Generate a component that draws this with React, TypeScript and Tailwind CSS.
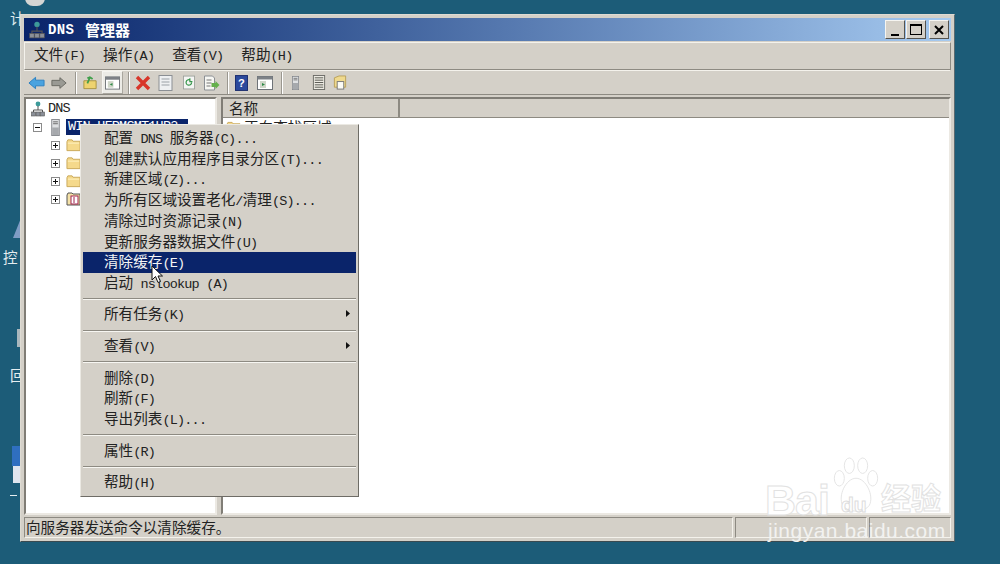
const FONT = "font-['Noto_Sans_CJK_SC','Liberation_Mono',monospace]";
const LATIN = "font-['Liberation_Mono',monospace] whitespace-pre text-[13.5px] tracking-[-0.8px]";

// latin runs are narrower than the CJK ones, the screenshot uses half-width glyphs
function Txt({ text }: { text: string }) {
  const parts = text.split(/([\x20-\x7e]+)/).filter(Boolean);
  return (
    <span>
      {parts.map((p, i) =>
        /^[\x20-\x7e]+$/.test(p) ? (
          <span key={i} className={LATIN}>
            {p}
          </span>
        ) : (
          <span key={i}>{p}</span>
        )
      )}
    </span>
  );
}

function Sep({ className = "" }: { className?: string }) {
  return <div className={`h-[22px] w-[2px] shrink-0 border-l border-r border-l-[#9a978f] border-r-white ${className}`} />;
}

function FolderIcon({ className = "" }: { className?: string }) {
  return (
    <svg viewBox="0 0 16 14" className={className}>
      <path d="M1 3.5 L2 1.5 H6.5 L7.5 3 H15 V13 H1 Z" fill="#f5d98b" stroke="#c9a85a" strokeWidth="1" />
      <path d="M2 5 H14" stroke="#fff3c4" strokeWidth="1" />
    </svg>
  );
}

function DnsIcon({ className = "" }: { className?: string }) {
  return (
    <svg viewBox="0 0 14 16" className={className}>
      <circle cx="7" cy="3" r="2.4" fill="#3d9a9a" />
      <path d="M7 5 V9 M2.5 12 V9 H11.5 V12" fill="none" stroke="#555" />
      <rect x="0.5" y="11" width="4" height="4" fill="#8a8f98" stroke="#555" strokeWidth="0.6" />
      <rect x="5" y="11" width="4" height="4" fill="#8a8f98" stroke="#555" strokeWidth="0.6" />
      <rect x="9.5" y="11" width="4" height="4" fill="#8a8f98" stroke="#555" strokeWidth="0.6" />
    </svg>
  );
}

function ServerIcon({ className = "" }: { className?: string }) {
  return (
    <svg viewBox="0 0 9 18" className={className}>
      <rect x="0.5" y="0.5" width="8" height="17" fill="#dfe1e3" stroke="#85888d" />
      <path d="M2 3 H7 M2 5 H7" stroke="#666" />
      <rect x="1" y="9" width="7" height="8" fill="#a6a9ad" />
    </svg>
  );
}

function PlusBox({ open = false }: { open?: boolean }) {
  return (
    <svg viewBox="0 0 9 9" className="h-[9px] w-[9px] shrink-0">
      <rect x="0.5" y="0.5" width="8" height="8" fill="#fff" stroke="#8b8b8b" />
      <path d={open ? "M2 4.5 H7" : "M2 4.5 H7 M4.5 2 V7"} stroke="#111" />
    </svg>
  );
}

function Toolbar() {
  return (
    <div className="mr-[1px] flex h-[25px] shrink-0 items-center border-y border-y-[#f4f2ec] border-b-[#8d8a82] bg-[#d4d0c8]">
      <svg viewBox="0 0 18 14" className="ml-[4px] h-[14px] w-[17px]">
        <path d="M1 7 L8 1 V4 H17 V10 H8 V13 Z" fill="#4aa3e0" stroke="#2a7fc0" />
      </svg>
      <svg viewBox="0 0 18 14" className="ml-[6px] h-[14px] w-[16px]">
        <path d="M17 7 L10 1 V4 H1 V10 H10 V13 Z" fill="#9a9a94" stroke="#66665f" />
      </svg>
      <Sep className="ml-[8px]" />
      <svg viewBox="0 0 16 16" className="ml-[6px] h-[15px] w-[14px]">
        <path d="M1 6 H15 V15 H1 Z" fill="#eed36f" stroke="#a58f3c" />
        <path d="M5 9 L8 2 L11 4 M8 2 L5 3" fill="none" stroke="#3f9f4a" strokeWidth="2" />
      </svg>
      <div className="ml-[5px] flex h-[23px] w-[21px] items-center justify-center border border-[#f5f4f0] border-b-[#a9a69e] border-r-[#a9a69e] bg-[#ecebe6]">
        <svg viewBox="0 0 16 14" className="h-[14px] w-[15px]">
          <rect x="0.5" y="0.5" width="15" height="13" fill="#fff" stroke="#6f7378" />
          <rect x="0.5" y="0.5" width="15" height="3" fill="#7d8186" />
          <rect x="3" y="5" width="6" height="7" fill="#cfd6c8" />
          <path d="M8 7 L5 8.5 L8 10 Z" fill="#2d8a46" />
        </svg>
      </div>
      <Sep className="ml-[5px]" />
      <svg viewBox="0 0 16 16" className="ml-[5px] h-[16px] w-[16px]">
        <path d="M2 2 L14 14 M14 2 L2 14" stroke="#d8362a" strokeWidth="3.4" />
      </svg>
      <svg viewBox="0 0 14 16" className="ml-[7px] h-[16px] w-[15px]">
        <rect x="0.5" y="0.5" width="13" height="15" fill="#eef0f2" stroke="#8b8f94" />
        <path d="M3 4 H11 M3 7 H11 M3 10 H11" stroke="#9aa0a6" />
      </svg>
      <svg viewBox="0 0 14 16" className="ml-[10px] h-[15px] w-[12px]">
        <rect x="0.5" y="0.5" width="13" height="15" fill="#f4f5f3" stroke="#9ba09a" />
        <path d="M10 8 A3.2 3.2 0 1 1 8 5 M8 3 V7 H11" fill="none" stroke="#35954a" strokeWidth="1.4" />
      </svg>
      <svg viewBox="0 0 16 16" className="ml-[8px] h-[16px] w-[17px]">
        <path d="M1 1 H9 L11 3 V15 H1 Z" fill="#f6f6f2" stroke="#8b8f94" />
        <path d="M3 5 H8 M3 8 H8 M3 11 H7" stroke="#777" />
        <path d="M8 8 H12 V6 L16 10 L12 14 V12 H8 Z" fill="#64b04c" />
      </svg>
      <Sep className="ml-[7px]" />
      <svg viewBox="0 0 14 17" className="ml-[6px] h-[16px] w-[13px]">
        <rect x="0.5" y="0.5" width="13" height="16" fill="#2c4a9c" stroke="#17296b" />
        <text x="7" y="13" textAnchor="middle" fontSize="12" fontWeight="700" fill="#fff" fontFamily="Liberation Sans">?</text>
      </svg>
      <svg viewBox="0 0 16 14" className="ml-[9px] h-[14px] w-[16px]">
        <rect x="0.5" y="0.5" width="15" height="13" fill="#fff" stroke="#6f7378" />
        <rect x="0.5" y="0.5" width="15" height="3" fill="#7d8186" />
        <rect x="3" y="5" width="6" height="7" fill="#cfd6c8" />
        <path d="M5 7 L8 8.5 L5 10 Z" fill="#2d8a46" />
      </svg>
      <Sep className="ml-[8px]" />
      <ServerIcon className="ml-[9px] h-[16px] w-[7px]" />
      <svg viewBox="0 0 13 16" className="ml-[13px] h-[15px] w-[14px]">
        <rect x="0.5" y="0.5" width="12" height="15" fill="#eceae2" stroke="#6b6b66" />
        <path d="M2 3 H11 M2 5.5 H11 M2 8 H11 M2 10.5 H11 M2 13 H11" stroke="#55554f" />
      </svg>
      <svg viewBox="0 0 14 16" className="ml-[7px] h-[15px] w-[14px]">
        <path d="M1 3 L6 1 H13 V13 H1 Z" fill="#efd98d" stroke="#b9a05a" />
        <rect x="4" y="7" width="7" height="8" fill="#fbfbf5" stroke="#777" />
      </svg>
    </div>
  );
}

function TreeChild({ icon }: { icon: React.ReactNode }) {
  return (
    <div className="flex h-[18px] items-center pl-[25px]">
      <PlusBox />
      <div className="ml-[6px] flex w-[15px] justify-center">{icon}</div>
    </div>
  );
}

function MenuItem({ label, active = false, arrow = false }: { label: string; active?: boolean; arrow?: boolean }) {
  return (
    <div
      className={`relative flex h-[20.7px] items-center pl-[21px] ${
        active ? "bg-[#0a246a] text-[#f4f4f4]" : "text-[#222]"
      }`}
    >
      <Txt text={label} />
      {arrow && (
        <svg viewBox="0 0 4 7" className="absolute right-[6px] top-[6px] h-[7px] w-[4px]">
          <path d="M0 0 L4 3.5 L0 7 Z" fill="#111" />
        </svg>
      )}
    </div>
  );
}

function MenuSep() {
  return (
    <div className="flex h-[10.9px] items-center">
      <div className="h-[2px] w-full border-t border-b border-t-[#8d8a82] border-b-[#f7f6f2]" />
    </div>
  );
}

function ContextMenu() {
  return (
    <div className="absolute left-[59px] top-[109px] z-10 h-[373px] w-[279px] border border-[#6e6c66] border-t-[#ebe9e3] border-l-[#ebe9e3] bg-[#d4d0c8] px-[2px] pt-[3px] text-[14.6px] leading-none">
      <MenuItem label="配置 DNS 服务器(C)..." />
      <MenuItem label="创建默认应用程序目录分区(T)..." />
      <MenuItem label="新建区域(Z)..." />
      <MenuItem label="为所有区域设置老化/清理(S)..." />
      <MenuItem label="清除过时资源记录(N)" />
      <MenuItem label="更新服务器数据文件(U)" />
      <MenuItem label="清除缓存(E)" active />
      <MenuItem label="启动 nslookup (A)" />
      <MenuSep />
      <MenuItem label="所有任务(K)" arrow />
      <MenuSep />
      <MenuItem label="查看(V)" arrow />
      <MenuSep />
      <MenuItem label="删除(D)" />
      <MenuItem label="刷新(F)" />
      <MenuItem label="导出列表(L)..." />
      <MenuSep />
      <MenuItem label="属性(R)" />
      <MenuSep />
      <MenuItem label="帮助(H)" />
    </div>
  );
}

function CapButton({ children, className = "" }: { children: React.ReactNode; className?: string }) {
  return (
    <div
      className={`flex h-[19px] w-[20px] items-center justify-center border border-[#f6f5f1] border-b-[#55534e] border-r-[#55534e] bg-[#d4d0c8] ${className}`}
    >
      {children}
    </div>
  );
}

function Watermark() {
  return (
    <div className="pointer-events-none absolute left-[765px] top-[455px] z-20 h-[100px] w-[190px]">
      <svg viewBox="0 0 60 60" preserveAspectRatio="none" className="absolute left-[66px] top-[2px] h-[58px] w-[50px]">
        <g fill="#fff" stroke="#e2e2e2" strokeWidth="1">
          <ellipse cx="22" cy="9" rx="6" ry="8" />
          <ellipse cx="38" cy="9" rx="6" ry="8" />
          <ellipse cx="10" cy="22" rx="6" ry="8" />
          <ellipse cx="50" cy="22" rx="6" ry="8" />
          <path d="M30 22 C42 22 52 40 46 50 C40 58 20 58 14 50 C8 40 18 22 30 22 Z" />
        </g>
      </svg>
      <span className="absolute left-0 top-[24px] font-['Liberation_Sans',sans-serif] text-[43px] font-bold leading-none tracking-[-1px] text-white [-webkit-text-stroke:1px_#e2e2e2]">
        Bai
      </span>
      <span className="absolute left-[76px] top-[39px] font-['Liberation_Sans',sans-serif] text-[21px] font-bold leading-none text-white [-webkit-text-stroke:1px_#dddddd]">
        du
      </span>
      <span className="absolute left-[116px] top-[26px] font-['Noto_Sans_CJK_SC',sans-serif] text-[30px] font-bold leading-none text-white [-webkit-text-stroke:1px_#e2e2e2]">
        经验
      </span>
      <span className="absolute left-[3px] top-[65px] font-['Liberation_Sans',sans-serif] text-[21px] leading-none tracking-[0.5px] text-[#f2f2f0]">
        jingyan.baidu.com
      </span>
    </div>
  );
}

export default function App() {
  return (
    <div className={`relative h-[564px] w-[1000px] overflow-hidden bg-[#1c5c78] ${FONT}`}>
      {/* desktop icons behind the window */}
      <div className="absolute left-[25px] top-[-6px] h-[12px] w-[20px] rounded-b-lg bg-[#d5d5d3]" />
      <span className="absolute left-[10px] top-[11px] text-[14.6px] leading-none text-[#dfe9ec]">计</span>
      <div className="absolute left-[13px] top-[218px] h-[20px] w-[8px] bg-[#7f9cc4] [clip-path:polygon(100%_0,100%_100%,0_100%)]" />
      <span className="absolute left-[3px] top-[250px] text-[14.6px] leading-none text-[#e6eef0]">控</span>
      <div className="absolute left-[17px] top-[329px] h-[18px] w-[3px] bg-[#a9b7bd]" />
      <span className="absolute left-[10px] top-[368px] text-[14.6px] leading-none text-[#e6eef0]">回</span>
      <div className="absolute left-[12px] top-[446px] h-[20px] w-[8px] bg-[#2f6fc0]" />
      <div className="absolute left-[13px] top-[466px] h-[17px] w-[7px] bg-[#dfe5ee]" />
      <div className="absolute left-[10px] top-[495px] h-px w-[7px] bg-[#e6eef0]" />

      {/* window */}
      <div className="absolute left-[20px] top-[14px] flex h-[528px] w-[935px] flex-col border border-[#dedbd3] border-b-[#3a4a50] border-r-[#5b6a70] bg-[#d4d0c8] p-[3px] text-[14.6px] leading-none text-[#222]">
        <div className="flex h-[23px] shrink-0 items-center bg-gradient-to-r from-[#0a246a] to-[#a6caf0] pl-[5px] pr-[2px]">
          <DnsIcon className="h-[18px] w-[16px]" />
          <span className="ml-[3px] font-['Liberation_Mono',monospace] text-[14px] font-bold tracking-[0.3px] text-white">DNS</span>
          <span className="ml-[11px] text-[15px] font-bold text-white">管理器</span>
          <div className="ml-auto flex items-center">
            <CapButton>
              <div className="mt-[10px] h-[2px] w-[8px] bg-black" />
            </CapButton>
            <CapButton className="ml-px">
              <div className="h-[11px] w-[12px] border border-t-2 border-black" />
            </CapButton>
            <CapButton className="ml-[3px]">
              <svg viewBox="0 0 10 10" className="h-[10px] w-[10px]">
                <path d="M1 1 L9 9 M9 1 L1 9" stroke="#000" strokeWidth="2" />
              </svg>
            </CapButton>
          </div>
        </div>

        <div className="mt-px flex h-[28px] shrink-0 items-center gap-[18px] border border-[#f4f2ec] border-b-[#8d8a82] border-r-[#8d8a82] pb-[2px] pl-[9px]">
          <Txt text="文件(F)" />
          <Txt text="操作(A)" />
          <Txt text="查看(V)" />
          <Txt text="帮助(H)" />
        </div>
        <Toolbar />

        <div className="mt-[2px] flex min-h-0 flex-1 gap-[4px]">
          {/* tree */}
          <div className="w-[193px] shrink-0 border-2 border-[#807d76] border-b-[#ece9e3] border-r-[#ece9e3] bg-white pt-px">
            <div className="flex h-[18px] items-center pl-[5px]">
              <DnsIcon className="h-[16px] w-[14px]" />
              <span className={`ml-[3px] ${LATIN}`}>DNS</span>
            </div>
            <div className="flex h-[18px] items-center pl-[7px]">
              <PlusBox open />
              <ServerIcon className="ml-[9px] h-[17px] w-[9px]" />
              <span className={`ml-[6px] flex h-[16px] w-[122px] items-center bg-[#0a246a] pl-[2px] text-white ${LATIN}`}>
                WIN-HFPMGMT1HP3
              </span>
            </div>
            <TreeChild icon={<FolderIcon className="h-[14px] w-[15px]" />} />
            <TreeChild icon={<FolderIcon className="h-[14px] w-[15px]" />} />
            <TreeChild icon={<FolderIcon className="h-[14px] w-[15px]" />} />
            <TreeChild
              icon={
                <svg viewBox="0 0 15 14" className="h-[14px] w-[15px]">
                  <path d="M1 3 L2 1 H6 L7 2 H14 V13 H1 Z" fill="#f5e2a8" stroke="#555" />
                  <rect x="5" y="4" width="7" height="8" fill="#fff" stroke="#a02050" />
                  <path d="M8 5 V11" stroke="#a02050" />
                </svg>
              }
            />
          </div>

          {/* list */}
          <div className="min-w-0 flex-1 border-2 border-[#807d76] border-b-[#ece9e3] border-r-[#ece9e3] bg-white">
            <div className="flex h-[19px] border-b border-[#8d8a82] bg-[#d4d0c8]">
              <div className="flex w-[177px] items-center border-r-2 border-r-[#8d8a82] pl-[6px]">名称</div>
            </div>
            <div className="flex h-[19px] items-center pl-[3px]">
              <FolderIcon className="h-[13px] w-[15px]" />
              <span className="ml-[3px]">正向查找区域</span>
            </div>
          </div>
        </div>

        {/* status bar */}
        <div className="mt-[2px] flex h-[21px] shrink-0 items-stretch">
          <div className="flex flex-1 items-center border border-[#8d8a82] border-b-[#f4f2ec] border-r-[#f4f2ec] pl-[1px]">
            向服务器发送命令以清除缓存。
          </div>
          <div className="ml-[2px] w-[132px] border border-[#8d8a82] border-b-[#f4f2ec] border-r-[#f4f2ec]" />
          <div className="ml-[2px] w-[82px] border border-[#8d8a82] border-b-[#f4f2ec] border-r-[#f4f2ec]" />
        </div>

        <ContextMenu />
      </div>

      {/* mouse pointer */}
      <svg viewBox="0 0 12 19" className="absolute left-[151px] top-[265px] z-20 h-[19px] w-[12px]">
        <path d="M1 1 V15 L4.5 11.5 L7 17.5 L9.5 16.5 L7 11 H11.5 Z" fill="#fff" stroke="#111" strokeWidth="1" />
      </svg>

      <Watermark />
    </div>
  );
}
